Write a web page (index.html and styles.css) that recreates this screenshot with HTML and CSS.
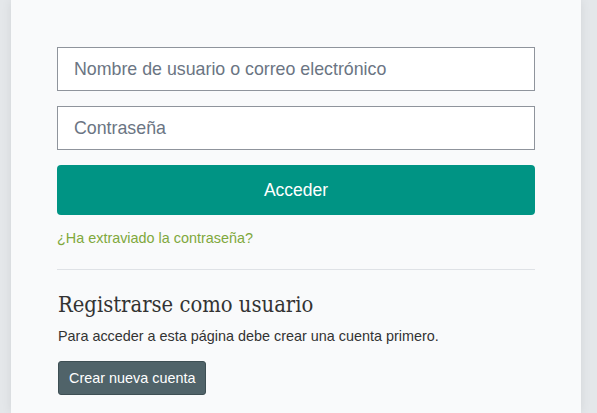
FILE: index.html
```html
<!DOCTYPE html>
<html lang="es">
<head>
<meta charset="utf-8">
<title>Acceder</title>
<link rel="stylesheet" href="styles.css">
</head>
<body>
<main class="card">
  <form class="login">
    <input class="field" type="text" placeholder="Nombre de usuario o correo electrónico">
    <input class="field" type="password" placeholder="Contraseña">
    <button class="btn-primary" type="button">Acceder</button>
  </form>
  <a class="lost" href="#">¿Ha extraviado la contraseña?</a>
  <hr class="divider">
  <section class="register">
    <h2 class="reg-title">Registrarse como usuario</h2>
    <p class="reg-text">Para acceder a esta página debe crear una cuenta primero.</p>
    <button class="btn-secondary" type="button">Crear nueva cuenta</button>
  </section>
</main>
</body>
</html>
```

FILE: styles.css
```css
* { box-sizing: border-box; }
html, body { margin: 0; height: 100%; }
body {
  background: #e4e7ea;
  font-family: "Liberation Sans", Arial, sans-serif;
  overflow: hidden;
}
.card {
  width: 570px;
  margin: 0 0 0 11px;
  min-height: 413px;
  background: #f9fafb;
  box-shadow: 0 0 10px rgba(0,0,0,0.08);
  padding: 47px 46px 0 46px;
}
.login {
  display: flex;
  flex-direction: column;
  gap: 15px;
}
.field {
  display: block;
  width: 100%;
  height: 44px;
  border: 1px solid #8f949c;
  background: #fff;
  padding: 0 16px;
  font-family: "Liberation Sans", Arial, sans-serif;
  font-size: 17.8px;
  color: #333;
  border-radius: 0;
  outline: none;
}
.field::placeholder { color: #6b7583; }
.btn-primary {
  height: 50px;
  width: 100%;
  border: 0;
  border-radius: 4px;
  background: #009484;
  color: #fff;
  font-family: "Liberation Sans", Arial, sans-serif;
  font-size: 17.5px;
}
.lost {
  display: block;
  margin-top: 15px;
  font-size: 14.4px;
  line-height: 16px;
  color: #80a83c;
  text-decoration: none;
}
.divider {
  margin: 23px 0 0 0;
  border: 0;
  border-top: 1px solid #dfe2e6;
}
.reg-title {
  margin: 21px 0 0 1px;
  font-family: "DejaVu Serif Condensed", "DejaVu Serif", serif;
  font-weight: normal;
  font-size: 21.8px;
  line-height: 27px;
  color: #333;
}
.reg-text {
  margin: 9px 0 0 1px;
  font-size: 14.4px;
  line-height: 18px;
  color: #333;
}
.btn-secondary {
  margin: 16px 0 0 1px;
  height: 34px;
  padding: 0 10px;
  border: 1px solid #3e4f54;
  border-radius: 3px;
  background: #506369;
  color: #fff;
  font-family: "Liberation Sans", Arial, sans-serif;
  font-size: 14.4px;
}
```
